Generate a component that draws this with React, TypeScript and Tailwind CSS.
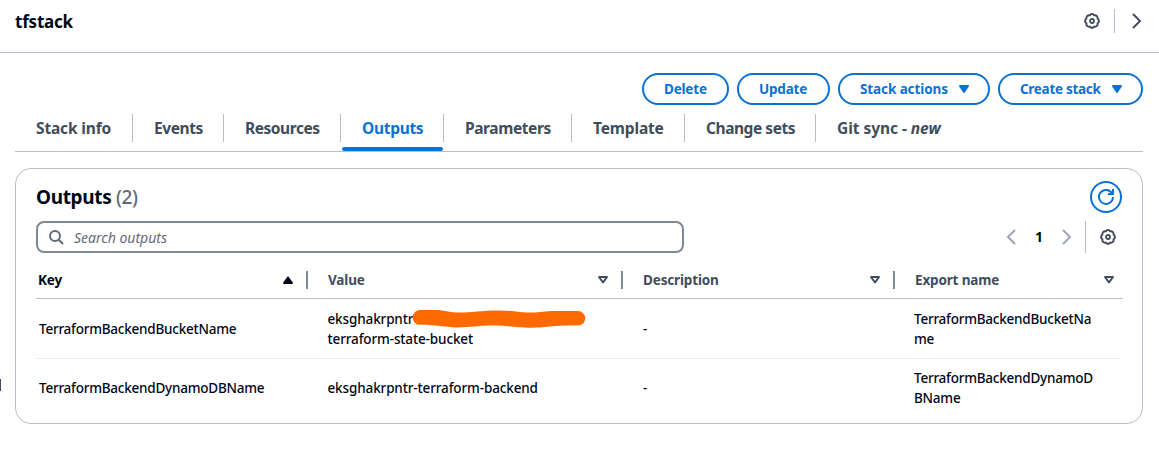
import type { ReactNode } from "react";

function Gear({ className = "" }: { className?: string }) {
  return (
    <svg width="16" height="16" viewBox="0 0 16 16" fill="none" stroke="#414d5c" strokeWidth="2" className={className}>
      <path
        strokeLinejoin="round"
        d="M13.6 5.68A2.7 2.7 0 0 1 13.6 10.32A2.7 2.7 0 0 1 10.32 13.6A2.7 2.7 0 0 1 5.68 13.6A2.7 2.7 0 0 1 2.4 10.32A2.7 2.7 0 0 1 2.4 5.68A2.7 2.7 0 0 1 5.68 2.4A2.7 2.7 0 0 1 10.32 2.4A2.7 2.7 0 0 1 13.6 5.68Z"
      />
      <circle cx="8" cy="8" r="2" strokeWidth="1.8" />
    </svg>
  );
}

function Chevron({ left = false, className = "" }: { left?: boolean; className?: string }) {
  return (
    <svg width="16" height="16" viewBox="0 0 16 16" fill="none" stroke="currentColor" strokeWidth="2" className={className}>
      <path d={left ? "M12 1 5 8l7 7" : "M4 1l7 7-7 7"} />
    </svg>
  );
}

function Caret() {
  return (
    <svg width="16" height="16" viewBox="0 0 16 16" fill="currentColor" stroke="currentColor" strokeWidth="2" strokeLinejoin="round">
      <path d="M4 5h8l-4 6-4-6Z" />
    </svg>
  );
}

function SortIcon({ ascending = false }: { ascending?: boolean }) {
  return ascending ? (
    <svg width="16" height="16" viewBox="0 0 16 16" fill="#000716" stroke="#000716" strokeWidth="2" strokeLinejoin="round">
      <path d="M4 11h8L8 5.5 4 11Z" />
    </svg>
  ) : (
    <svg width="16" height="16" viewBox="0 0 16 16" fill="none" stroke="#414d5c" strokeWidth="2" strokeLinejoin="round">
      <path d="M4 5h8l-4 5.5L4 5Z" />
    </svg>
  );
}

function Button({ className, children }: { className: string; children: ReactNode }) {
  return (
    <button
      className={`flex h-8 items-center rounded-full border-2 border-[#0972d3] pl-5 text-[13.5px] font-bold whitespace-nowrap text-[#0972d3] ${className}`}
    >
      {children}
    </button>
  );
}

const tabs: { label: ReactNode; className: string; active?: boolean }[] = [
  { label: "Stack info", className: "w-[118px] border-r tracking-[-0.15px]" },
  { label: "Events", className: "w-[91px] border-r tracking-[-0.4px]" },
  { label: "Resources", className: "w-[117px] border-r tracking-[-0.45px]" },
  { label: "Outputs", className: "w-[103px] border-r tracking-[-0.3px]", active: true },
  { label: "Parameters", className: "w-[128px] border-r tracking-[-0.4px]" },
  { label: "Template", className: "w-[113px] border-r tracking-[-0.15px]" },
  { label: "Change sets", className: "w-[131px] border-r tracking-[-0.45px]" },
  { label: <span>Git sync - <i>new</i></span>, className: "w-[140px] tracking-[-0.05px]" },
];

const columns = [
  { label: "Key", className: "border-r-2 pr-[10px] pl-0.5 text-[#000716]", ascending: true },
  { label: "Value", className: "border-r-2 pr-[10px] pl-5 text-[#414d5c]" },
  { label: "Description", className: "border-r-2 pr-[10px] pl-5 text-[#414d5c]" },
  { label: "Export name", className: "pr-[6px] pl-5 text-[#414d5c]" },
];

export default function App() {
  return (
    <div className="relative h-[452px] w-[1159px] overflow-hidden bg-white font-['Noto_Sans',sans-serif] text-[#000716]">
      <header className="flex h-[53px] items-center justify-between border-b border-[#b6bec9] pr-[14px] pb-[10px] pl-[15px]">
        <h1 className="pt-0.5 text-[17px] leading-6 font-bold tracking-[-0.2px]">tfstack</h1>
        <div className="flex items-center">
          <Gear />
          <span className="ml-[14px] h-6 w-px bg-[#b6bec9]" />
          <Chevron className="ml-[14px] text-[#414d5c]" />
        </div>
      </header>

      <main className="px-[15px] pt-5 pr-4">
        <div className="flex justify-end gap-2">
          <Button className="w-[87px] tracking-[-0.2px]">Delete</Button>
          <Button className="w-[93px] tracking-[-0.2px]">Update</Button>
          <Button className="w-[152px] justify-between pr-4 tracking-[-0.1px]">Stack actions<Caret /></Button>
          <Button className="w-[145px] justify-between pr-4 tracking-[-0.3px]">Create stack<Caret /></Button>
        </div>

        <nav className="flex h-[47px] border-b border-[#b6bec9] pt-[9px]">
          {tabs.map((tab, i) => (
            <div key={i} className="flex shrink-0 flex-col">
              <div
                className={`flex h-7 items-center border-[#b6bec9] pt-0.5 pl-[21px] text-[15.5px] font-bold whitespace-nowrap ${tab.active ? "text-[#0972d3]" : "text-[#414d5c]"} ${tab.className}`}
              >
                {tab.label}
              </div>
              {tab.active && <span className="mt-[5px] mr-px ml-px h-1 rounded-sm bg-[#0972d3]" />}
            </div>
          ))}
        </nav>

        <section className="mt-4 h-[256px] rounded-2xl border border-[#b6bec9] px-5 pt-3">
          <div className="flex h-8 items-center justify-between">
            <h2 className="text-[19px] font-bold tracking-[-0.35px]">
              Outputs <span className="font-medium text-[#5f6b7a]">(2)</span>
            </h2>
            <button className="flex size-8 items-center justify-center rounded-full border-2 border-[#0972d3]">
              <svg width="16" height="16" viewBox="0 0 16 16" fill="none" stroke="#0972d3" strokeWidth="2">
                <path d="M15 8a7 7 0 1 1-2-5l2 2" />
                <path d="M15 0v5h-5" />
              </svg>
            </button>
          </div>

          <div className="mt-2 flex h-8 items-center">
            <div className="flex h-8 w-[648px] items-center rounded-lg border-2 border-[#7d8998] pl-[10px]">
              <svg width="16" height="16" viewBox="0 0 16 16" fill="none" stroke="#5f6b7a" strokeWidth="2">
                <circle cx="7" cy="7" r="5" />
                <path d="m15 15-4.5-4.5" />
              </svg>
              <span className="ml-[10px] pt-0.5 text-sm text-[#5f6b7a] italic">Search outputs</span>
            </div>
            <Chevron left className="ml-[319px] text-[#9ba7b6]" />
            <span className="w-10 text-center text-sm font-bold">1</span>
            <Chevron className="text-[#9ba7b6]" />
            <span className="ml-[10px] h-8 w-px bg-[#b6bec9]" />
            <Gear className="ml-[14px]" />
          </div>

          <div className="grid h-[46px] w-[1087px] grid-cols-[272px_315px_272px_228px] border-b border-[#b6bec9] pt-[18px]">
            {columns.map((c) => (
              <div
                key={c.label}
                className={`flex h-[18px] items-center justify-between border-[#7d8998] text-[13.5px] font-bold tracking-[-0.15px] ${c.className}`}
              >
                {c.label}
                <SortIcon ascending={c.ascending} />
              </div>
            ))}
          </div>

          <div className="grid h-[60px] w-[1085px] grid-cols-[272px_315px_272px_226px] items-center border-b border-[#e9ebed] text-[13.5px] leading-5 font-medium tracking-[-0.23px]">
            <div className="pl-[3px]">TerraformBackendBucketName</div>
            <div className="relative pl-[19.5px] tracking-[-0.13px]">
              eksghakrpntr-
              <br />
              terraform-state-bucket
              <svg className="absolute top-0 left-[104px]" width="174" height="20" viewBox="0 0 174 20">
                <path
                  fill="#ff6a00"
                  d="M8 1H23C31 1 36 3.2 44 3.4C58 3.6 70 1.4 85 1.4C101 1.4 108 3.6 120 3.6C129 3.6 132 2 143 2H166A7.3 7.3 0 0 1 166 16.6H153C139 16.8 132 18.8 120 18.8C104 18.8 96 16.6 82 16.6C66 16.6 57 18.6 44 18.4C32 18.2 26 15.8 8 15.8A7.4 7.4 0 0 1 8 1Z"
                />
              </svg>
            </div>
            <div className="pl-5">-</div>
            <div className="pl-[19px]">TerraformBackendBucketNa<br />me</div>
          </div>
          <div className="grid h-[58px] w-[1085px] grid-cols-[272px_315px_272px_226px] items-center text-[13.5px] leading-5 font-medium tracking-[-0.23px]">
            <div className="pl-[3px]">TerraformBackendDynamoDBName</div>
            <div className="pl-[19.5px] tracking-[-0.13px]">eksghakrpntr-terraform-backend</div>
            <div className="pl-5">-</div>
            <div className="pl-[19px]">TerraformBackendDynamoD<br />BName</div>
          </div>
        </section>
      </main>
      <span className="absolute top-[379px] left-0 h-3 w-px bg-[#414d5c]" />
    </div>
  );
}
